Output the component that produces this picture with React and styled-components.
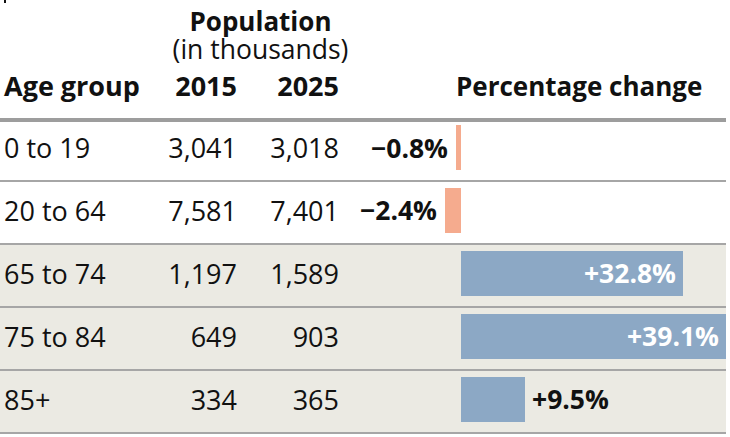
import styled, { createGlobalStyle } from "styled-components";

const GlobalStyle = createGlobalStyle`
  body {
    margin: 0;
    background: #ffffff;
    font-family: "Open Sans", "Liberation Sans", sans-serif;
    color: #111111;
  }
`;

const SCALE = 6.78; // px per percentage point
const ZERO = 122; // space left of the zero line inside the chart column

const rows = [
  { age: "0 to 19", y2015: "3,041", y2025: "3,018", pct: -0.8, label: "\u22120.8%" },
  { age: "20 to 64", y2015: "7,581", y2025: "7,401", pct: -2.4, label: "\u22122.4%" },
  { age: "65 to 74", y2015: "1,197", y2025: "1,589", pct: 32.8, label: "+32.8%", shaded: true },
  { age: "75 to 84", y2015: "649", y2025: "903", pct: 39.1, label: "+39.1%", shaded: true },
  { age: "85+", y2015: "334", y2025: "365", pct: 9.5, label: "+9.5%", shaded: true },
];

const Page = styled.div`
  position: relative;
  width: 726px;
`;

const Tick = styled.div`
  position: absolute;
  left: 4px;
  top: 0;
  width: 2px;
  height: 3px;
  background: #111;
`;

const Grid = styled.div`
  display: grid;
  grid-template-columns: 150px 87px 102px 1fr;
`;

const Header = styled(Grid)`
  grid-template-rows: 1fr auto;
  padding-bottom: 17px;
  box-sizing: border-box;
  border-bottom: 4px solid #9d9d9d;
  height: 122px;
`;

const Group = styled.div`
  grid-column: 2 / 4;
  grid-row: 1;
  padding-left: 32px;
  padding-top: 7px;
  display: flex;
  flex-direction: column;
  align-items: center;
  white-space: nowrap;
  line-height: 28px;
`;

const GroupTitle = styled.div`
  font-weight: 700;
  font-size: 26px;
`;

const GroupSub = styled.div`
  font-size: 26.5px;
`;

const HeadCell = styled.div`
  grid-row: 2;
  font-weight: 700;
  font-size: ${(p) => p.$size || 27}px;
  line-height: 30px;
  white-space: nowrap;
  text-align: ${(p) => (p.$right ? "right" : "left")};
  padding-left: ${(p) => p.$indent || 0}px;
`;

const Row = styled(Grid)`
  height: 63px;
  box-sizing: border-box;
  border-top: 2px solid #a6a6a6;
  padding: 5px 0 10px;
  background: ${(p) => (p.$shaded ? "#ebeae3" : "#ffffff")};
  align-items: center;
  font-size: 27px;
  &:first-child {
    border-top: none;
    height: 58px;
    padding-top: 3px;
  }
  &:last-child {
    border-bottom: 2px solid #a6a6a6;
    height: 65px;
  }
`;

const Cell = styled.div`
  text-align: ${(p) => (p.$right ? "right" : "left")};
  padding-left: ${(p) => (p.$right ? 0 : 4)}px;
  line-height: 45px;
  white-space: nowrap;
`;

const Chart = styled.div`
  display: flex;
  height: 45px;
`;

const Side = styled.div`
  display: flex;
  align-items: center;
  height: 100%;
  width: ${(p) => p.$w}px;
  justify-content: ${(p) => (p.$neg ? "flex-end" : "flex-start")};
  flex: none;
`;

const Bar = styled.div`
  height: 45px;
  background: ${(p) => (p.$neg ? "#f5ab8e" : "#8ca8c5")};
  display: flex;
  align-items: center;
  justify-content: flex-end;
  flex: none;
  box-sizing: border-box;
  padding-right: ${(p) => (p.$neg ? 0 : 7)}px;
`;

const Label = styled.span`
  font-weight: 700;
  font-size: 26.5px;
  color: ${(p) => (p.$inside ? "#ffffff" : "#111111")};
  margin: ${(p) => (p.$neg ? "0 8px 0 0" : p.$inside ? "0" : "0 0 0 7px")};
  white-space: nowrap;
`;

function ChangeBar({ pct, label }) {
  const w = Math.round(Math.abs(pct) * SCALE);
  if (pct < 0) {
    return (
      <Chart>
        <Side $w={ZERO} $neg>
          <Label $neg>{label}</Label>
          <Bar $neg style={{ width: w }} />
        </Side>
      </Chart>
    );
  }
  const inside = w > 120;
  return (
    <Chart>
      <Side $w={ZERO} $neg />
      <Side $w={265}>
        <Bar style={{ width: w }}>{inside && <Label $inside>{label}</Label>}</Bar>
        {!inside && <Label>{label}</Label>}
      </Side>
    </Chart>
  );
}

export default function App() {
  return (
    <>
      <GlobalStyle />
      <Page>
        <Tick />
        <Header>
          <Group>
            <GroupTitle>Population</GroupTitle>
            <GroupSub>(in thousands)</GroupSub>
          </Group>
          <HeadCell $indent={4}>Age group</HeadCell>
          <HeadCell $right>2015</HeadCell>
          <HeadCell $right>2025</HeadCell>
          <HeadCell $indent={117} $size={26}>Percentage change</HeadCell>
        </Header>
        <div>
          {rows.map((r) => (
            <Row key={r.age} $shaded={r.shaded}>
              <Cell>{r.age}</Cell>
              <Cell $right>{r.y2015}</Cell>
              <Cell $right>{r.y2025}</Cell>
              <ChangeBar pct={r.pct} label={r.label} />
            </Row>
          ))}
        </div>
      </Page>
    </>
  );
}
